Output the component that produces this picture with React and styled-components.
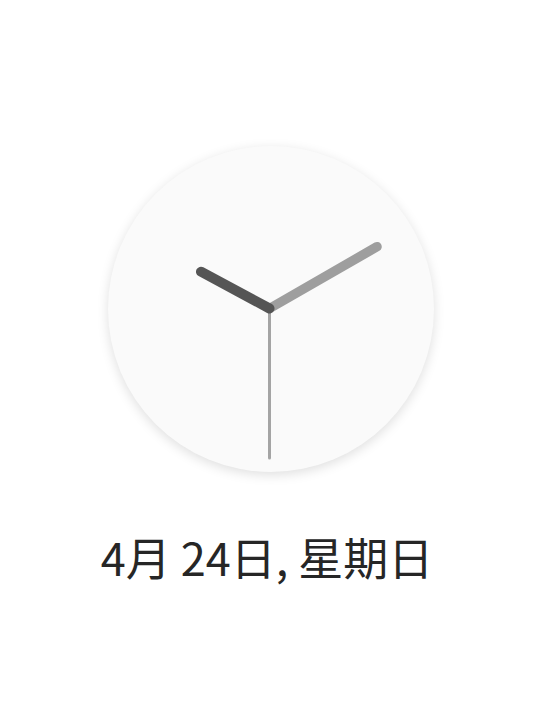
import styled, { createGlobalStyle } from "styled-components";

const GlobalStyle = createGlobalStyle`
  html, body {
    margin: 0;
    padding: 0;
    background: #ffffff;
  }
`;

const Screen = styled.div`
  width: 540px;
  height: 702px;
  display: flex;
  flex-direction: column;
  align-items: center;
  padding-top: 146px;
  box-sizing: border-box;
  font-family: "Noto Sans CJK SC", "Noto Sans", sans-serif;
`;

const Face = styled.div`
  width: 326px;
  height: 326px;
  border-radius: 50%;
  background: #fafafa;
  box-shadow: 0 3px 12px rgba(0, 0, 0, 0.13);
  margin-left: 2px;
`;

const DateLine = styled.div`
  margin-top: 57px;
  font-size: 45px;
  line-height: 56px;
  color: #262626;
  margin-right: 6px;
`;

const Hand = ({ x, y, width, color, cx = 161.5, cy = 162.5 }) => (
  <line
    x1={cx}
    y1={cy}
    x2={x}
    y2={y}
    stroke={color}
    strokeWidth={width}
    strokeLinecap="round"
  />
);

export default function App() {
  return (
    <>
      <GlobalStyle />
      <Screen>
        <Face>
          <svg width="326" height="326" viewBox="0 0 326 326">
            <Hand x={161.5} y={312} width={3} color="#a4a4a4" />
            <Hand x={269} y={100.7} width={9.5} color="#9e9e9e" />
            <Hand x={93} y={125.7} width={10} color="#555555" />
          </svg>
        </Face>
        <DateLine>4月 24日, 星期日</DateLine>
      </Screen>
    </>
  );
}
